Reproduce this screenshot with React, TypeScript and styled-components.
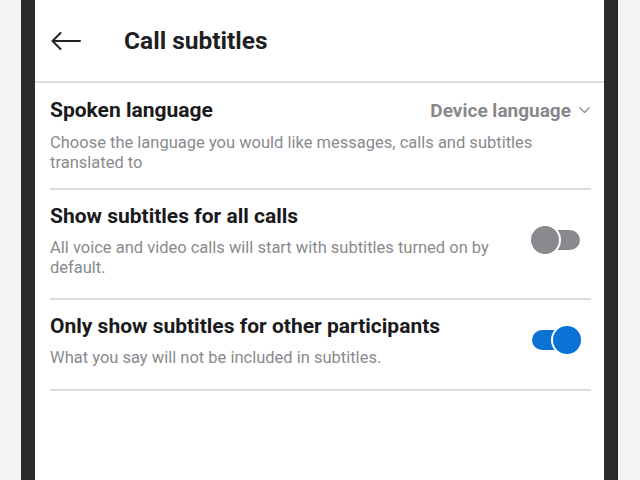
import React, { useState } from 'react';
import styled, { createGlobalStyle } from 'styled-components';

const GlobalStyle = createGlobalStyle`
  html, body {
    margin: 0;
    padding: 0;
    height: 100%;
  }
  body {
    font-family: Roboto, "Noto Sans", sans-serif;
    background: #f3f3f3;
  }
  #root {
    height: 100%;
  }
`;

type ToggleProps = {
  on: boolean;
};

function Toggle({ on }: ToggleProps) {
  const [checked, setChecked] = useState(on);
  return (
    <Switch onClick={() => setChecked(!checked)}>
      <Track $on={checked} />
      <Knob $on={checked} />
    </Switch>
  );
}

type SettingProps = {
  title: string;
  description: string;
  on: boolean;
};

function ToggleSetting({ title, description, on }: SettingProps) {
  return (
    <Row $top={13} $bottom={21}>
      <TextBlock>
        <Title $gap={9}>{title}</Title>
        <Description>{description}</Description>
      </TextBlock>
      <Toggle on={on} />
    </Row>
  );
}

export default function App() {
  return (
    <>
      <GlobalStyle />
      <Page>
        <Bezel />
        <Screen>
          <Header>
            <BackButton aria-label="Back">
              <svg width="30" height="18" viewBox="0 0 30 18" fill="none">
                <path d="M1.5 9H29M9.5 1L1.5 9L9.5 17" stroke="#222" strokeWidth="2" strokeLinecap="round" strokeLinejoin="round" />
              </svg>
            </BackButton>
            <HeaderTitle>Call subtitles</HeaderTitle>
          </Header>
          <Content>
            <Row $top={14} $bottom={16}>
              <TextBlock>
                <TitleLine>
                  <Title $gap={10}>Spoken language</Title>
                  <Dropdown>
                    Device language
                    <Chevron width="11" height="6" viewBox="0 0 11 6" fill="none">
                      <path d="M0.5 0.5L5.5 5.5L10.5 0.5" stroke="#8a8a8e" strokeWidth="1.2" />
                    </Chevron>
                  </Dropdown>
                </TitleLine>
                <Description>
                  Choose the language you would like messages, calls and subtitles translated to
                </Description>
              </TextBlock>
            </Row>
            <ToggleSetting
              title="Show subtitles for all calls"
              description="All voice and video calls will start with subtitles turned on by default."
              on={false}
            />
            <ToggleSetting
              title="Only show subtitles for other participants"
              description="What you say will not be included in subtitles."
              on={true}
            />
          </Content>
        </Screen>
        <Bezel />
        <Margin />
      </Page>
    </>
  );
}

const Page = styled.div`
  display: flex;
  height: 480px;
  padding-left: 21px;
  background: #f3f3f3;
  overflow: hidden;
`;

const Bezel = styled.div`
  width: 14px;
  flex-shrink: 0;
  background: #2a2a2a;
`;

const Margin = styled.div`
  width: 22px;
  flex-shrink: 0;
`;

const Screen = styled.div`
  flex: 1;
  background: #ffffff;
  display: flex;
  flex-direction: column;
`;

const Header = styled.div`
  height: 83px;
  display: flex;
  align-items: center;
  padding-left: 16px;
  border-bottom: 2px solid #dcdcdc;
  box-sizing: border-box;
`;

const BackButton = styled.div`
  width: 30px;
  height: 18px;
  display: flex;
  margin-right: 43px;
`;

const HeaderTitle = styled.div`
  font-size: 24.5px;
  font-weight: 700;
  color: #1f1f23;
`;

const Content = styled.div`
  padding: 0 13px 0 15px;
`;

const Row = styled.div<{ $top: number; $bottom: number }>`
  display: flex;
  align-items: center;
  padding: ${(props) => props.$top}px 0 ${(props) => props.$bottom}px;
  border-bottom: 2px solid #dcdcdc;
`;

const TextBlock = styled.div`
  flex: 1;
  min-width: 0;
`;

const TitleLine = styled.div`
  display: flex;
  align-items: baseline;
  justify-content: space-between;
`;

const Title = styled.div<{ $gap: number }>`
  font-size: 21px;
  line-height: 26px;
  font-weight: 700;
  color: #1a1a1c;
  margin-bottom: ${(props) => props.$gap}px;
`;

const Dropdown = styled.div`
  display: flex;
  align-items: baseline;
  font-size: 19px;
  font-weight: 700;
  color: #88888c;
`;

const Chevron = styled.svg`
  margin-left: 8px;
  margin-right: 1px;
  transform: translateY(-4px);
`;

const Description = styled.div`
  font-size: 16.5px;
  line-height: 19.5px;
  color: #8a8a8e;
`;

const Switch = styled.div`
  position: relative;
  width: 54px;
  height: 32px;
  flex-shrink: 0;
  margin: 0 8px 0 30px;
  cursor: pointer;
`;

const Track = styled.div<{ $on: boolean }>`
  position: absolute;
  top: 6px;
  left: ${(props) => (props.$on ? '3px' : '16px')};
  width: 35px;
  height: 20px;
  border-radius: 10px;
  background: ${(props) => (props.$on ? '#0a72d4' : '#8a8a8e')};
`;

const Knob = styled.div<{ $on: boolean }>`
  position: absolute;
  top: 0;
  left: ${(props) => (props.$on ? '22px' : '0')};
  width: 28px;
  height: 28px;
  border-radius: 50%;
  border: 2px solid #ffffff;
  background: ${(props) => (props.$on ? '#0a72d4' : '#8a8a8e')};
`;
